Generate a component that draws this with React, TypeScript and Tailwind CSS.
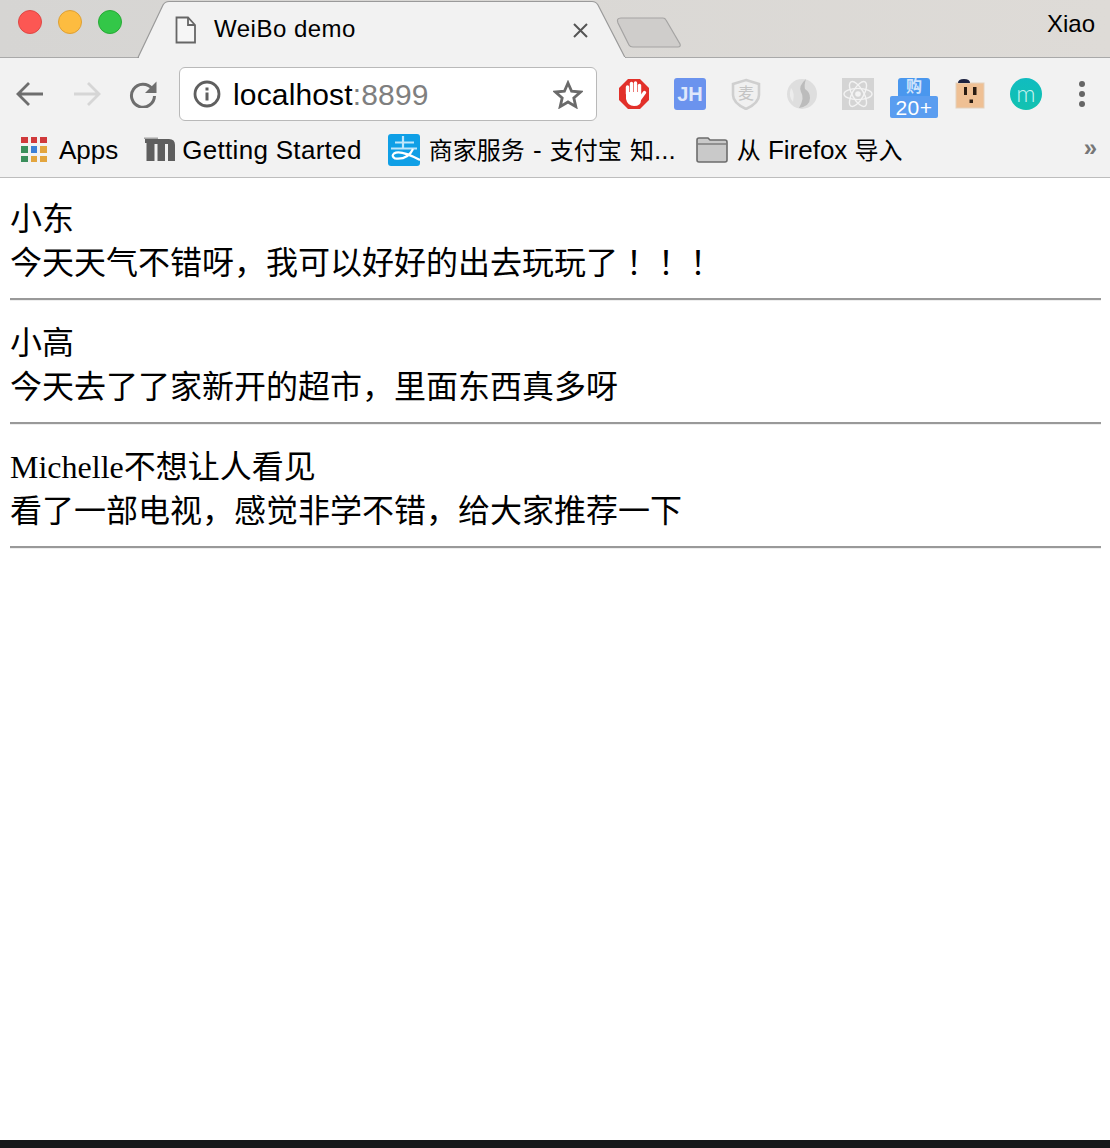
import React from "react";

const sans = "font-['Liberation_Sans','Noto_Sans_CJK_SC',sans-serif]";

function Tab() {
  return (
    <svg className="absolute left-0 top-0" width="700" height="58" viewBox="0 0 700 58">
      <path d="M138 57.5 L163 5 Q165 1.5 169 1.5 L592 1.5 Q596 1.5 598 5 L625 57.5 Z" fill="#f2f2f2" stroke="#9a9a9a" strokeWidth="1.2" />
      <path d="M139 58 L625 58" stroke="#f2f2f2" strokeWidth="2" />
      <path d="M618 23 Q616 18 621 18 L663 18 Q665 18 666 20 L680 44 Q681 47 678 47 L633 47 Q630 47 629 45 Z" fill="#cfcdcb" stroke="#a5a4a3" strokeWidth="1.2" />
    </svg>
  );
}

function DocIcon() {
  return (
    <svg width="22" height="28" viewBox="0 0 22 28" fill="none" stroke="#666" strokeWidth="1.8">
      <path d="M1.5 1.5 H13 L20 9 V26.5 H1.5 Z" fill="#f6f6f6" />
      <path d="M13 1.5 V9 H20" />
    </svg>
  );
}

function Back({ color }: { color: string }) {
  return (
    <svg width="28" height="26" viewBox="0 0 28 26" fill="none" stroke={color} strokeWidth="2.8">
      <path d="M27 13 H2 M13 2 L2 13 L13 24" />
    </svg>
  );
}

function Forward({ color }: { color: string }) {
  return (
    <svg width="28" height="26" viewBox="0 0 28 26" fill="none" stroke={color} strokeWidth="2.8">
      <path d="M1 13 H26 M15 2 L26 13 L15 24" />
    </svg>
  );
}

function Reload() {
  return (
    <svg width="28" height="28" viewBox="0 0 28 28" fill="none">
      <path d="M23 8.5 A11.5 11.5 0 1 0 25.5 16" stroke="#6e6e6e" strokeWidth="3" />
      <path d="M27.5 1.5 V13 H16 Z" fill="#6e6e6e" />
    </svg>
  );
}

function InfoIcon() {
  return (
    <svg width="28" height="28" viewBox="0 0 28 28" fill="none">
      <circle cx="14" cy="14" r="12" stroke="#5f5f5f" strokeWidth="2.8" />
      <rect x="12.5" y="12.5" width="3" height="8" fill="#5f5f5f" />
      <rect x="12.5" y="7.5" width="3" height="3" fill="#5f5f5f" />
    </svg>
  );
}

function StarIcon() {
  return (
    <svg width="30" height="29" viewBox="0 0 30 29" fill="none">
      <path d="M15 3 L18.6 11.2 L27.5 12 L20.8 17.9 L22.8 26.6 L15 22 L7.2 26.6 L9.2 17.9 L2.5 12 L11.4 11.2 Z" stroke="#6a6a6a" strokeWidth="2.8" strokeLinejoin="miter" />
    </svg>
  );
}

function StopHand() {
  return (
    <svg width="32" height="32" viewBox="0 0 32 32">
      <path d="M10 1 H22 L31 10 V22 L22 31 H10 L1 22 V10 Z" fill="#e2302a" />
      <g stroke="#fff" strokeWidth="3.4" strokeLinecap="round" fill="none">
        <path d="M9.5 16 V9" />
        <path d="M13.5 16 V5.5" />
        <path d="M17.5 16 V5" />
        <path d="M21.5 16 V7.5" />
        <path d="M21 22 L26.5 14.5" />
      </g>
      <path d="M8 14 H23 V22 Q23 28 16 28 Q9.5 28 8 21 Z" fill="#fff" />
    </svg>
  );
}

function JH() {
  return (
    <div className={`w-8 h-8 rounded-[3px] bg-[#6b93ee] flex items-center justify-center text-[20px] font-bold leading-none text-[#dfe7fb] ${sans}`}>
      JH
    </div>
  );
}

function Shield() {
  return (
    <div className="relative w-8 h-8">
      <svg width="32" height="32" viewBox="0 0 32 32" fill="none" className="absolute inset-0">
        <path d="M16 2 L29 6 V17 Q29 25 16 31 Q3 25 3 17 V6 Z" fill="#f0f0f0" stroke="#cfcfcf" strokeWidth="2.6" />
      </svg>
      <span className={`absolute inset-0 flex items-center justify-center text-[16px] leading-none text-[#c4c4c4] ${sans}`}>麦</span>
    </div>
  );
}

function Sphere() {
  return (
    <svg width="32" height="32" viewBox="0 0 32 32">
      <circle cx="16" cy="16" r="15" fill="#dedede" />
      <path d="M20 1 Q12 8 15 14 Q19 20 13 30 Q24 28 24 20 Q24 14 19 11 Q18 7 20 1 Z" fill="#bcbcbc" />
      <path d="M5 10 Q9 14 7 24 Q2 18 5 10 Z" fill="#ececec" />
    </svg>
  );
}

function ReactIcon() {
  return (
    <svg width="32" height="32" viewBox="0 0 32 32" fill="none">
      <rect width="32" height="32" fill="#d4d4d4" />
      <g stroke="#f3f3f3" strokeWidth="1.4">
        <ellipse cx="16" cy="16" rx="14" ry="5.6" />
        <ellipse cx="16" cy="16" rx="14" ry="5.6" transform="rotate(60 16 16)" />
        <ellipse cx="16" cy="16" rx="14" ry="5.6" transform="rotate(120 16 16)" />
      </g>
      <circle cx="16" cy="16" r="2.8" fill="#f3f3f3" />
    </svg>
  );
}

function BadgeIcon() {
  return (
    <div className="relative w-8 h-8">
      <div className={`w-8 h-[18px] rounded-t-[3px] bg-[#4a97ee] flex justify-center text-[16px] font-bold leading-[18px] text-[#cfe3fb] ${sans}`}>
        购
      </div>
      <div className={`absolute left-[-8px] top-[18px] w-12 h-[22px] rounded-[2px] bg-[#5a9df0] flex items-center justify-center text-[21px] font-medium tracking-[0.5px] leading-none text-white ${sans}`}>
        20+
      </div>
    </div>
  );
}

function Plug() {
  return (
    <svg width="30" height="32" viewBox="0 0 30 32">
      <rect x="1" y="5" width="28" height="25" fill="#efc094" stroke="#e3d1bd" />
      <path d="M3 5 Q3 1 9 1 Q15 1 15 5 Z" fill="#1d2240" />
      <rect x="9" y="9" width="3" height="8" fill="#2a1c12" />
      <rect x="18" y="9" width="3.5" height="8" fill="#2a1c12" />
      <path d="M14.5 21.5 H18 V25 H14.5 Z" fill="#2a1c12" />
    </svg>
  );
}

function MCircle() {
  return (
    <div className="w-8 h-8 rounded-full bg-[linear-gradient(180deg,#10bcc0,#12c2b0)] flex items-center justify-center text-[24px] leading-none pb-[3px] text-[#c8f3ef] font-['Lato',sans-serif] font-light">
      m
    </div>
  );
}

function Dots() {
  return (
    <div className="flex flex-col gap-[4px] items-center">
      <div className="w-[6px] h-[6px] rounded-full bg-[#666]" />
      <div className="w-[6px] h-[6px] rounded-full bg-[#666]" />
      <div className="w-[6px] h-[6px] rounded-full bg-[#666]" />
    </div>
  );
}

function AppsIcon() {
  const c = ["#d0393b", "#d0393b", "#d0393b", "#3b8f5c", "#3d80d6", "#e3a53e", "#3b8f5c", "#e3a53e", "#e3a53e"];
  return (
    <div className="grid grid-cols-3 gap-[3px] w-[26px]">
      {c.map((x, i) => (
        <div key={i} className="w-[6.5px] h-[6.5px]" style={{ background: x }} />
      ))}
    </div>
  );
}

function MLogo() {
  return (
    <svg width="31" height="25" viewBox="0 0 31 25" fill="#5f5f5f">
      <path d="M1 2 H25 Q31 2 31 8 V24 H24 V7 H21 V24 H13.5 V7 H10.5 V24 H2.5 V6 H1 Z" />
      <path d="M0 0.5 H14 V2 H0 Z" fill="#a5a5a5" />
    </svg>
  );
}

function AlipayIcon() {
  return (
    <div className="relative w-8 h-8 rounded-[3px] bg-[#0f9fe6] overflow-hidden">
      <svg width="32" height="32" viewBox="0 0 32 32" fill="none" stroke="#fff" strokeWidth="2.2">
        <path d="M7 8.5 H26 M15 2 V14 M3 14.5 H29" stroke="#bfe6fa" />
        <path d="M25 15 Q20 26 7 24.5 Q3 22 6 19.5 Q12 15.5 32 26" />
      </svg>
    </div>
  );
}

function Folder() {
  return (
    <svg width="32" height="26" viewBox="0 0 32 26">
      <path d="M1 3 Q1 1 3 1 H12 L14 3 H29 Q31 3 31 5 V23 Q31 25 29 25 H3 Q1 25 1 23 Z" fill="#c9c9c9" stroke="#6c6c6c" strokeWidth="1.6" />
      <path d="M1.5 7 H30.5" stroke="#777" strokeWidth="1.4" />
    </svg>
  );
}

function Post({ name, text }: { name: React.ReactNode; text: React.ReactNode }) {
  return (
    <div>
      <div className="h-[44px] leading-[44px]">{name}</div>
      <div className="h-[44px] leading-[44px]">{text}</div>
      <hr className="mt-[13px] mb-[20px] h-[3px] border-0 border-t-2 border-t-[#999] bg-[#eee]" />
    </div>
  );
}

export default function App() {
  return (
    <div className="h-[1148px] w-[1110px] flex flex-col bg-white overflow-hidden">
      <div className={`relative h-[58px] shrink-0 border-b border-b-[#a9a9a9] bg-[linear-gradient(90deg,#d6d5d3,#dedbd7)] flex items-start ${sans}`}>
        <Tab />
        <div className="relative flex gap-[16px] ml-[18px] mt-[10px]">
          <div className="w-6 h-6 rounded-full bg-[#fc5753] border border-[#df4744]" />
          <div className="w-6 h-6 rounded-full bg-[#fdbc40] border border-[#dea034]" />
          <div className="w-6 h-6 rounded-full bg-[#33c748] border border-[#27aa35]" />
        </div>
        <div className="relative ml-[53px] mt-[16px]">
          <DocIcon />
        </div>
        <div className="relative ml-[17px] mt-[14px] text-[24px] tracking-[0.5px] leading-[30px] text-black">WeiBo demo</div>
        <svg className="relative ml-[217px] mt-[23px]" width="15" height="15" viewBox="0 0 15 15" stroke="#555" strokeWidth="2">
          <path d="M1 1 L14 14 M14 1 L1 14" />
        </svg>
        <div className="relative ml-auto mr-[15px] mt-[9px] text-[24px] leading-[30px] text-black">Xiao</div>
      </div>

      <div className={`h-[70px] shrink-0 bg-[#f2f2f2] flex items-center pt-[2px] ${sans}`}>
        <div className="ml-[16px]"><Back color="#6e6e6e" /></div>
        <div className="ml-[29px]"><Forward color="#d6d6d6" /></div>
        <div className="ml-[28px]"><Reload /></div>
        <div className="ml-[22px] w-[418px] h-[54px] rounded-[6px] bg-white border border-[#b9b9b9] flex items-center">
          <div className="ml-[13px]"><InfoIcon /></div>
          <div className="ml-[12px] pt-[2px] text-[30px] tracking-[0.15px] leading-none text-black">
            localhost<span className="text-[#7f7f7f]">:8899</span>
          </div>
          <div className="ml-auto mr-[13px]"><StarIcon /></div>
        </div>
        <div className="ml-[21px]"><StopHand /></div>
        <div className="ml-[24px]"><JH /></div>
        <div className="ml-[24px]"><Shield /></div>
        <div className="ml-[24px]"><Sphere /></div>
        <div className="ml-[24px]"><ReactIcon /></div>
        <div className="ml-[24px]"><BadgeIcon /></div>
        <div className="ml-[25px]"><Plug /></div>
        <div className="ml-[25px]"><MCircle /></div>
        <div className="ml-[37px]"><Dots /></div>
      </div>

      <div className={`h-[50px] shrink-0 bg-[#f2f2f2] border-b border-b-[#bdbdbd] flex items-center pb-[6px] text-[26px] leading-none text-black whitespace-nowrap ${sans}`}>
        <div className="ml-[21px]"><AppsIcon /></div>
        <div className="ml-[12px]">Apps</div>
        <div className="ml-[26px]"><MLogo /></div>
        <div className="ml-[7px] tracking-[0.3px]">Getting Started</div>
        <div className="ml-[26px]"><AlipayIcon /></div>
        <div className="ml-[9px] [word-spacing:1px]">
          <span className="text-[24px]">商家服务</span> - <span className="text-[24px]">支付宝</span> <span className="text-[24px]">知</span>...
        </div>
        <div className="ml-[20px]"><Folder /></div>
        <div className="ml-[9px]">
          <span className="text-[24px]">从</span> Firefox <span className="text-[24px]">导入</span>
        </div>
        <div className="ml-auto mr-[13px] text-[#777] text-[24px] font-bold pb-[3px]">»</div>
      </div>

      <div className="flex-1 pl-[10px] pr-[9px] pt-[19px] text-[32px] text-black whitespace-nowrap font-['Liberation_Serif','Noto_Sans_CJK_SC',serif]">
        <Post
          name="小东"
          text={
            <>
              今天天气不错呀，我可以好好的出去玩玩了
              <span className="font-['Liberation_Serif','Noto_Sans_CJK_TC',serif]">！！！</span>
            </>
          }
        />
        <Post name="小高" text="今天去了了家新开的超市，里面东西真多呀" />
        <Post name="Michelle不想让人看见" text="看了一部电视，感觉非学不错，给大家推荐一下" />
      </div>
      <div className="h-[8px] shrink-0 bg-[#17181a]" />
    </div>
  );
}
